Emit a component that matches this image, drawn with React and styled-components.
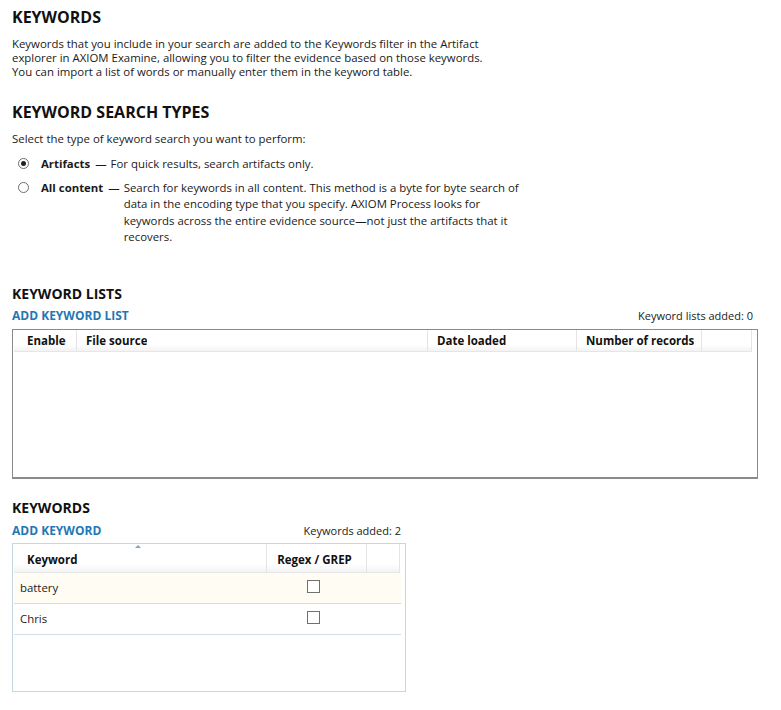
import React from "react";
import styled, { createGlobalStyle } from "styled-components";

const Global = createGlobalStyle`
  html, body { margin: 0; padding: 0; background: #fff; }
  body { font-family: "Segoe UI", "Open Sans", sans-serif; color: #1a1a1a; }
`;

const Page = styled.div`
  width: 781px;
  height: 710px;
  box-sizing: border-box;
  padding: 7px 24px 0 12px;
  display: flex;
  flex-direction: column;
`;

const H1 = styled.h1`
  margin: ${(p) => p.$mt || 0}px 0 0;
  font-size: 16px;
  font-weight: 700;
  line-height: 20px;
  color: #111;
`;

const H2 = styled.h2`
  margin: ${(p) => p.$mt || 0}px 0 0;
  font-size: 14px;
  font-weight: 700;
  line-height: 18px;
  color: #111;
`;

const Para = styled.p`
  margin: ${(p) => p.$mt || 0}px 0 0;
  font-size: 11.4px;
  line-height: 14px;
  width: ${(p) => p.$w || "auto"};
`;

const Options = styled.div`
  display: flex;
  flex-direction: column;
  gap: 7px;
  margin-top: 10px;
  padding-left: 6px;
`;

const Option = styled.label`
  display: grid;
  grid-template-columns: 23px auto auto 1fr;
  align-items: start;
  font-size: 11.4px;
  line-height: 16.5px;
  width: 502px;
`;

const Radio = styled.span`
  width: 11px;
  height: 11px;
  margin-top: 2px;
  border: 1px solid #6d6d6d;
  border-radius: 50%;
  box-sizing: border-box;
  display: flex;
  align-items: center;
  justify-content: center;
  &::after {
    content: "";
    width: 5px;
    height: 5px;
    border-radius: 50%;
    background: ${(p) => (p.$checked ? "#222" : "transparent")};
  }
`;

const OptName = styled.span`
  font-weight: 700;
  white-space: nowrap;
  padding-right: 5px;
`;

const Dash = styled.span`
  padding-right: 4px;
`;

const OptDesc = styled.span``;

const ActionRow = styled.div`
  display: flex;
  justify-content: space-between;
  align-items: baseline;
  width: ${(p) => p.$w}px;
  margin-top: ${(p) => p.$mt}px;
  font-size: 11px;
  line-height: 18px;
`;

const Link = styled.a`
  color: #1f78b4;
  font-weight: 700;
  font-size: 12px;
  text-decoration: none;
  cursor: pointer;
`;

const Count = styled.span`
  color: #222;
`;

const Table = styled.div`
  box-sizing: border-box;
  width: ${(p) => p.$w}px;
  height: ${(p) => p.$h}px;
  margin-top: ${(p) => p.$mt}px;
  border: 1px solid ${(p) => p.$border};
  border-bottom-width: ${(p) => p.$bb || 1}px;
  padding: 0 5px 0 1px;
  display: flex;
  flex-direction: column;
`;

const HeadRow = styled.div`
  display: grid;
  grid-template-columns: ${(p) => p.$cols};
  height: ${(p) => p.$h}px;
  background: linear-gradient(#ffffff 70%, #f3f3f3);
  border-bottom: 1px solid #e6e6e6;
`;

const HeadCell = styled.div`
  position: relative;
  display: flex;
  align-items: center;
  box-sizing: border-box;
  min-width: 0;
  padding-top: ${(p) => p.$pt || 0}px;
  padding-left: ${(p) => p.$pl ?? 9}px;
  padding-right: ${(p) => p.$pr || 0}px;
  justify-content: ${(p) => (p.$center ? "center" : "flex-start")};
  font-size: 11.5px;
  font-weight: 700;
  white-space: nowrap;
  border-right: 1px solid #e4e4e4;
  color: #111;
`;

const HeadLabel = styled.span`
  overflow: hidden;
  text-overflow: clip;
  white-space: nowrap;
`;

const SortArrow = styled.span`
  position: absolute;
  top: 1px;
  left: 121px;
  width: 0;
  height: 0;
  border-left: 3px solid transparent;
  border-right: 3px solid transparent;
  border-bottom: 3px solid #7aa6c8;
`;

const Row = styled.div`
  display: grid;
  grid-template-columns: 253px 100px 1fr;
  height: 30px;
  margin-right: -1px;
  background: ${(p) => (p.$hl ? "#fffcf3" : "#fff")};
  border-bottom: 1px solid #d4dde3;
  font-size: 11.4px;
`;

const Cell = styled.div`
  display: flex;
  align-items: center;
  justify-content: ${(p) => (p.$center ? "center" : "flex-start")};
  padding-left: ${(p) => (p.$center ? 0 : 6)}px;
  padding-right: ${(p) => (p.$center ? 8 : 0)}px;
`;

const Checkbox = styled.span`
  width: 13px;
  height: 13px;
  box-sizing: border-box;
  border: 1px solid #707070;
  background: #fff;
  margin-top: -2px;
`;

const listCols = "63px 351px 149px 125px 1fr";
const kwCols = "253px 100px 1fr";

export default function App() {
  return (
    <Page>
      <Global />
      <H1>KEYWORDS</H1>
      <Para $mt={10} $w="472px">
        Keywords that you include in your search are added to the Keywords filter in the Artifact
        explorer in AXIOM Examine, allowing you to filter the evidence based on those keywords.
        You can import a list of words or manually enter them in the keyword table.
      </Para>

      <H1 as="h2" $mt={23}>KEYWORD SEARCH TYPES</H1>
      <Para $mt={10}>Select the type of keyword search you want to perform:</Para>
      <Options>
        <Option>
          <Radio $checked />
          <OptName>Artifacts</OptName>
          <Dash>—</Dash>
          <OptDesc>For quick results, search artifacts only.</OptDesc>
        </Option>
        <Option>
          <Radio />
          <OptName>All content</OptName>
          <Dash>—</Dash>
          <OptDesc>
            Search for keywords in all content. This method is a byte for byte search of data in
            the encoding type that you specify. AXIOM Process looks for keywords across the entire
            evidence source—not just the artifacts that it recovers.
          </OptDesc>
        </Option>
      </Options>

      <H2 $mt={39}>KEYWORD LISTS</H2>
      <ActionRow $w={741} $mt={4}>
        <Link>ADD KEYWORD LIST</Link>
        <Count>Keyword lists added: 0</Count>
      </ActionRow>
      <Table $w={746} $h={150} $mt={4} $border="#8a8a8a" $bb={2}>
        <HeadRow $cols={listCols} $h={21}>
          <HeadCell $pl={13} $pr={10}><HeadLabel>Enabled</HeadLabel></HeadCell>
          <HeadCell><HeadLabel>File source</HeadLabel></HeadCell>
          <HeadCell><HeadLabel>Date loaded</HeadLabel></HeadCell>
          <HeadCell $pr={6}><HeadLabel>Number of records</HeadLabel></HeadCell>
          <HeadCell />
        </HeadRow>
      </Table>

      <H2 $mt={20}>KEYWORDS</H2>
      <ActionRow $w={389} $mt={5}>
        <Link>ADD KEYWORD</Link>
        <Count>Keywords added: 2</Count>
      </ActionRow>
      <Table $w={394} $h={149} $mt={3} $border="#c3d7e3">
        <HeadRow $cols={kwCols} $h={28}>
          <HeadCell $pl={13} $pt={4}>
            <HeadLabel>Keyword</HeadLabel>
            <SortArrow />
          </HeadCell>
          <HeadCell $center $pl={0} $pr={4} $pt={4}><HeadLabel>Regex / GREP</HeadLabel></HeadCell>
          <HeadCell />
        </HeadRow>
        <Row $hl>
          <Cell>battery</Cell>
          <Cell $center><Checkbox /></Cell>
          <Cell />
        </Row>
        <Row>
          <Cell>Chris</Cell>
          <Cell $center><Checkbox /></Cell>
          <Cell />
        </Row>
      </Table>
    </Page>
  );
}
